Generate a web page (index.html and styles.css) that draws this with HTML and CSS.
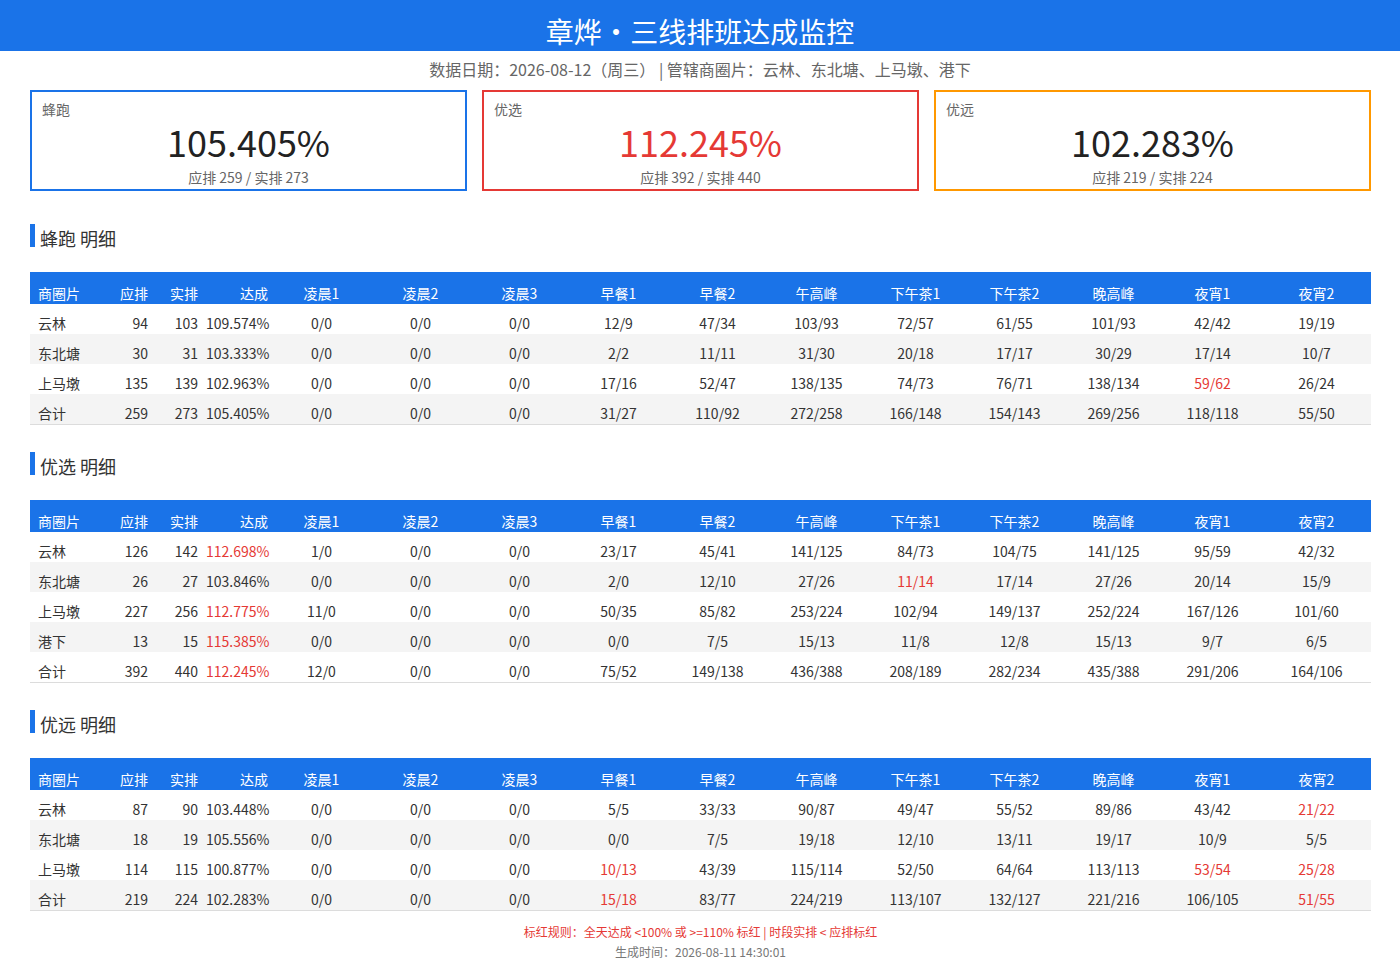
FILE: index.html
```html
<!DOCTYPE html>
<html lang="zh-CN">
<head>
<meta charset="utf-8">
<title>章烨 · 三线排班达成监控</title>
<link rel="stylesheet" href="styles.css">
</head>
<body>
<header class="topbar"><h1>章烨 · 三线排班达成监控</h1></header>
<div class="subtitle">数据日期：2026-08-12（周三） | 管辖商圈片：云林、东北塘、上马墩、港下</div>
<main class="page">
  <div class="cards">
    <div class="card card-blue">
      <div class="card-label">蜂跑</div>
      <div class="card-value">105.405%</div>
      <div class="card-sub">应排 259 / 实排 273</div>
    </div>
    <div class="card card-red">
      <div class="card-label">优选</div>
      <div class="card-value red">112.245%</div>
      <div class="card-sub">应排 392 / 实排 440</div>
    </div>
    <div class="card card-orange">
      <div class="card-label">优远</div>
      <div class="card-value">102.283%</div>
      <div class="card-sub">应排 219 / 实排 224</div>
    </div>
  </div>

  <section class="section first">
    <h2 class="sec-title">蜂跑 明细</h2>
    <table class="grid">
      <colgroup><col class="w70"><col class="w52"><col class="w50"><col class="w70"><col class="w99"><col class="w99"><col class="w99"><col class="w99"><col class="w99"><col class="w99"><col class="w99"><col class="w99"><col class="w99"><col class="w99"><col class="w109"></colgroup>
      <thead><tr><th class="l">商圈片</th><th class="r">应排</th><th class="r">实排</th><th class="r">达成</th><th>凌晨1</th><th>凌晨2</th><th>凌晨3</th><th>早餐1</th><th>早餐2</th><th>午高峰</th><th>下午茶1</th><th>下午茶2</th><th>晚高峰</th><th>夜宵1</th><th>夜宵2</th></tr></thead>
      <tbody>
        <tr><td class="l">云林</td><td class="r">94</td><td class="r">103</td><td class="r">109.574%</td><td>0/0</td><td>0/0</td><td>0/0</td><td>12/9</td><td>47/34</td><td>103/93</td><td>72/57</td><td>61/55</td><td>101/93</td><td>42/42</td><td>19/19</td></tr>
        <tr><td class="l">东北塘</td><td class="r">30</td><td class="r">31</td><td class="r">103.333%</td><td>0/0</td><td>0/0</td><td>0/0</td><td>2/2</td><td>11/11</td><td>31/30</td><td>20/18</td><td>17/17</td><td>30/29</td><td>17/14</td><td>10/7</td></tr>
        <tr><td class="l">上马墩</td><td class="r">135</td><td class="r">139</td><td class="r">102.963%</td><td>0/0</td><td>0/0</td><td>0/0</td><td>17/16</td><td>52/47</td><td>138/135</td><td>74/73</td><td>76/71</td><td>138/134</td><td class="red">59/62</td><td>26/24</td></tr>
        <tr><td class="l">合计</td><td class="r">259</td><td class="r">273</td><td class="r">105.405%</td><td>0/0</td><td>0/0</td><td>0/0</td><td>31/27</td><td>110/92</td><td>272/258</td><td>166/148</td><td>154/143</td><td>269/256</td><td>118/118</td><td>55/50</td></tr>
      </tbody>
    </table>
  </section>

  <section class="section">
    <h2 class="sec-title">优选 明细</h2>
    <table class="grid">
      <colgroup><col class="w70"><col class="w52"><col class="w50"><col class="w70"><col class="w99"><col class="w99"><col class="w99"><col class="w99"><col class="w99"><col class="w99"><col class="w99"><col class="w99"><col class="w99"><col class="w99"><col class="w109"></colgroup>
      <thead><tr><th class="l">商圈片</th><th class="r">应排</th><th class="r">实排</th><th class="r">达成</th><th>凌晨1</th><th>凌晨2</th><th>凌晨3</th><th>早餐1</th><th>早餐2</th><th>午高峰</th><th>下午茶1</th><th>下午茶2</th><th>晚高峰</th><th>夜宵1</th><th>夜宵2</th></tr></thead>
      <tbody>
        <tr><td class="l">云林</td><td class="r">126</td><td class="r">142</td><td class="r red">112.698%</td><td>1/0</td><td>0/0</td><td>0/0</td><td>23/17</td><td>45/41</td><td>141/125</td><td>84/73</td><td>104/75</td><td>141/125</td><td>95/59</td><td>42/32</td></tr>
        <tr><td class="l">东北塘</td><td class="r">26</td><td class="r">27</td><td class="r">103.846%</td><td>0/0</td><td>0/0</td><td>0/0</td><td>2/0</td><td>12/10</td><td>27/26</td><td class="red">11/14</td><td>17/14</td><td>27/26</td><td>20/14</td><td>15/9</td></tr>
        <tr><td class="l">上马墩</td><td class="r">227</td><td class="r">256</td><td class="r red">112.775%</td><td>11/0</td><td>0/0</td><td>0/0</td><td>50/35</td><td>85/82</td><td>253/224</td><td>102/94</td><td>149/137</td><td>252/224</td><td>167/126</td><td>101/60</td></tr>
        <tr><td class="l">港下</td><td class="r">13</td><td class="r">15</td><td class="r red">115.385%</td><td>0/0</td><td>0/0</td><td>0/0</td><td>0/0</td><td>7/5</td><td>15/13</td><td>11/8</td><td>12/8</td><td>15/13</td><td>9/7</td><td>6/5</td></tr>
        <tr><td class="l">合计</td><td class="r">392</td><td class="r">440</td><td class="r red">112.245%</td><td>12/0</td><td>0/0</td><td>0/0</td><td>75/52</td><td>149/138</td><td>436/388</td><td>208/189</td><td>282/234</td><td>435/388</td><td>291/206</td><td>164/106</td></tr>
      </tbody>
    </table>
  </section>

  <section class="section">
    <h2 class="sec-title">优远 明细</h2>
    <table class="grid">
      <colgroup><col class="w70"><col class="w52"><col class="w50"><col class="w70"><col class="w99"><col class="w99"><col class="w99"><col class="w99"><col class="w99"><col class="w99"><col class="w99"><col class="w99"><col class="w99"><col class="w99"><col class="w109"></colgroup>
      <thead><tr><th class="l">商圈片</th><th class="r">应排</th><th class="r">实排</th><th class="r">达成</th><th>凌晨1</th><th>凌晨2</th><th>凌晨3</th><th>早餐1</th><th>早餐2</th><th>午高峰</th><th>下午茶1</th><th>下午茶2</th><th>晚高峰</th><th>夜宵1</th><th>夜宵2</th></tr></thead>
      <tbody>
        <tr><td class="l">云林</td><td class="r">87</td><td class="r">90</td><td class="r">103.448%</td><td>0/0</td><td>0/0</td><td>0/0</td><td>5/5</td><td>33/33</td><td>90/87</td><td>49/47</td><td>55/52</td><td>89/86</td><td>43/42</td><td class="red">21/22</td></tr>
        <tr><td class="l">东北塘</td><td class="r">18</td><td class="r">19</td><td class="r">105.556%</td><td>0/0</td><td>0/0</td><td>0/0</td><td>0/0</td><td>7/5</td><td>19/18</td><td>12/10</td><td>13/11</td><td>19/17</td><td>10/9</td><td>5/5</td></tr>
        <tr><td class="l">上马墩</td><td class="r">114</td><td class="r">115</td><td class="r">100.877%</td><td>0/0</td><td>0/0</td><td>0/0</td><td class="red">10/13</td><td>43/39</td><td>115/114</td><td>52/50</td><td>64/64</td><td>113/113</td><td class="red">53/54</td><td class="red">25/28</td></tr>
        <tr><td class="l">合计</td><td class="r">219</td><td class="r">224</td><td class="r">102.283%</td><td>0/0</td><td>0/0</td><td>0/0</td><td class="red">15/18</td><td>83/77</td><td>224/219</td><td>113/107</td><td>132/127</td><td>221/216</td><td>106/105</td><td class="red">51/55</td></tr>
      </tbody>
    </table>
  </section>

  <footer class="foot">
    <div class="rule">标红规则：全天达成 &lt;100% 或 &gt;=110% 标红 | 时段实排 &lt; 应排标红</div>
    <div class="gen">生成时间：2026-08-11 14:30:01</div>
  </footer>
</main>
</body>
</html>
```

FILE: styles.css
```css
* { box-sizing: border-box; }

body {
  margin: 0;
  font-family: "Noto Sans CJK SC", "Noto Sans", sans-serif;
  color: #333;
  background: #fff;
}

.topbar {
  height: 51px;
  background: #1a73e8;
  padding-top: 14px;
  text-align: center;
}

.topbar h1 {
  margin: 0;
  font-size: 28px;
  line-height: 34px;
  font-weight: 400;
  color: #fff;
  word-spacing: -6px;
}

.subtitle {
  margin-top: 6px;
  text-align: center;
  font-size: 16px;
  line-height: 24px;
  color: #666;
}

.page {
  padding: 0 29px 0 30px;
}

.cards {
  display: grid;
  grid-template-columns: repeat(3, 1fr);
  gap: 15px;
  margin-top: 9px;
}

.card {
  height: 101px;
  border: 2px solid #1a73e8;
  padding: 8px 10px 0;
}

.card-blue { border-color: #1a73e8; }
.card-red { border-color: #e53935; }
.card-orange { border-color: #ff9800; }

.card-label {
  font-size: 14px;
  line-height: 18px;
  color: #666;
}

.card-value {
  margin-top: 2px;
  text-align: center;
  font-size: 36px;
  line-height: 43px;
  color: #222;
}

.card-sub {
  margin-top: 5px;
  text-align: center;
  font-size: 14px;
  line-height: 18px;
  color: #666;
}

.red { color: #e53935; }
.card-value.red { color: #e53935; }

.section { margin-top: 27px; }
.section.first { margin-top: 33px; }

.sec-title {
  margin: 0 0 25px;
  height: 23px;
  border-left: 5px solid #1a73e8;
  padding-left: 5px;
  font-size: 18px;
  line-height: 29px;
  font-weight: 400;
  color: #333;
}

.grid {
  width: 100%;
  border-collapse: collapse;
  table-layout: fixed;
  font-size: 14px;
}

.w70 { width: 70px; }
.w52 { width: 52px; }
.w50 { width: 50px; }
.w99 { width: 99px; }
.w109 { width: 109px; }

.grid th {
  background: #1a73e8;
  color: #fff;
  font-weight: 400;
  padding: 10px 4px 0;
  line-height: 22px;
  text-align: center;
  white-space: nowrap;
}

.grid td {
  padding: 8px 4px 0;
  line-height: 22px;
  text-align: center;
  white-space: nowrap;
  color: #333;
}

.grid td.red { color: #e53935; }

.grid .l { text-align: left; padding-left: 8px; }
.grid .r { text-align: right; }

.grid tbody tr:nth-child(even) td { background: #f4f4f4; }
.grid tbody tr:last-child td { border-bottom: 1px solid #dcdcdc; }

.foot {
  margin-top: 11px;
  text-align: center;
  font-size: 12px;
  line-height: 20px;
}

.foot .rule { color: #e53935; }
.foot .gen { color: #777; }
```
